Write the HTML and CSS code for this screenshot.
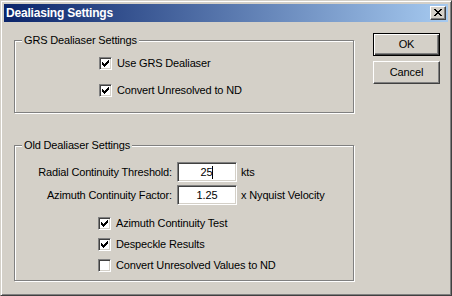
FILE: index.html
```html
<!DOCTYPE html>
<html>
<head>
<meta charset="utf-8">
<title>Dealiasing Settings</title>
<link rel="stylesheet" href="styles.css">
</head>
<body>
<div class="window">
  <div class="caption">
    <span class="caption-title">Dealiasing Settings</span>
    <span class="caption-close"><svg width="8" height="7" viewBox="0 0 8 7" shape-rendering="crispEdges"><path d="M0 0h2v1h-2z M6 0h2v1h-2z M1 1h2v1h-2z M5 1h2v1h-2z M2 2h4v1h-4z M3 3h2v1h-2z M2 4h4v1h-4z M1 5h2v1h-2z M5 5h2v1h-2z M0 6h2v1h-2z M6 6h2v1h-2z" fill="#000"/></svg></span>
  </div>
  <div class="client">
    <div class="groups">
      <div class="group group-grs">
        <span class="legend">GRS Dealiaser Settings</span>
        <div class="checks checks-grs">
          <div class="check"><span class="box"><svg width="7" height="7" viewBox="0 0 7 7" shape-rendering="crispEdges"><path d="M6 0h1v1h-1z M5 1h2v1h-2z M0 2h1v1h-1z M4 2h3v1h-3z M0 3h2v1h-2z M3 3h3v1h-3z M0 4h5v1h-5z M1 5h3v1h-3z M2 6h1v1h-1z" fill="#000"/></svg></span><span class="check-text">Use GRS Dealiaser</span></div>
          <div class="check"><span class="box"><svg width="7" height="7" viewBox="0 0 7 7" shape-rendering="crispEdges"><path d="M6 0h1v1h-1z M5 1h2v1h-2z M0 2h1v1h-1z M4 2h3v1h-3z M0 3h2v1h-2z M3 3h3v1h-3z M0 4h5v1h-5z M1 5h3v1h-3z M2 6h1v1h-1z" fill="#000"/></svg></span><span class="check-text">Convert Unresolved to ND</span></div>
        </div>
      </div>
      <div class="group group-old">
        <span class="legend">Old Dealiaser Settings</span>
        <div class="fields">
          <span class="field-label">Radial Continuity Threshold:</span>
          <span class="edit">25<span class="caret"></span></span>
          <span class="unit">kts</span>
          <span class="field-label">Azimuth Continuity Factor:</span>
          <span class="edit">1.25</span>
          <span class="unit">x Nyquist Velocity</span>
        </div>
        <div class="checks checks-old">
          <div class="check"><span class="box"><svg width="7" height="7" viewBox="0 0 7 7" shape-rendering="crispEdges"><path d="M6 0h1v1h-1z M5 1h2v1h-2z M0 2h1v1h-1z M4 2h3v1h-3z M0 3h2v1h-2z M3 3h3v1h-3z M0 4h5v1h-5z M1 5h3v1h-3z M2 6h1v1h-1z" fill="#000"/></svg></span><span class="check-text">Azimuth Continuity Test</span></div>
          <div class="check"><span class="box"><svg width="7" height="7" viewBox="0 0 7 7" shape-rendering="crispEdges"><path d="M6 0h1v1h-1z M5 1h2v1h-2z M0 2h1v1h-1z M4 2h3v1h-3z M0 3h2v1h-2z M3 3h3v1h-3z M0 4h5v1h-5z M1 5h3v1h-3z M2 6h1v1h-1z" fill="#000"/></svg></span><span class="check-text">Despeckle Results</span></div>
          <div class="check"><span class="box"></span><span class="check-text">Convert Unresolved Values to ND</span></div>
        </div>
      </div>
    </div>
    <div class="buttons">
      <div class="btn btn-default">OK</div>
      <div class="btn">Cancel</div>
    </div>
  </div>
</div>
</body>
</html>
```

FILE: styles.css
```css
* { box-sizing: border-box; }
html, body { margin: 0; padding: 0; background: #d4d0c8; }
body {
  font-family: "Liberation Sans", Arial, sans-serif;
  font-size: 11px;
  line-height: 13px;
  letter-spacing: -0.15px;
  color: #000;
}
.window {
  width: 452px;
  height: 296px;
  background: #d4d0c8;
  border: 1px solid;
  border-color: #d4d0c8 #404040 #404040 #d4d0c8;
  box-shadow: inset 1px 1px 0 #fff, inset -1px -1px 0 #808080;
  padding: 3px;
  display: flex;
  flex-direction: column;
}
.caption {
  height: 18px;
  background: linear-gradient(to right, #0a246a, #a6caf0);
  display: flex;
  align-items: center;
  padding: 0 2px 0 2px;
}
.caption-title {
  color: #fff;
  font-weight: bold;
  font-size: 12px;
  letter-spacing: -0.2px;
}
.caption-close {
  margin-left: auto;
  width: 16px;
  height: 14px;
  background: #d4d0c8;
  border: 1px solid;
  border-color: #fff #404040 #404040 #fff;
  box-shadow: inset -1px -1px 0 #808080;
  display: flex;
  justify-content: center;
  padding-top: 2px;
}
.caption-close svg { display: block; }
.client {
  display: flex;
  align-items: flex-start;
  padding: 11px 0 0 10px;
  column-gap: 19px;
}
.groups {
  width: 340px;
  padding-top: 7px;
  display: flex;
  flex-direction: column;
  row-gap: 32px;
}
.group {
  position: relative;
  border: 1px solid #808080;
  box-shadow: 1px 1px 0 #fff, inset 1px 1px 0 #fff;
}
.legend {
  position: absolute;
  left: 7px;
  top: -7px;
  padding: 0 2px;
  background: #d4d0c8;
  white-space: nowrap;
}
.group-grs { padding: 16px 0 15px 0; }
.group-old { padding: 16px 0 8px 0; }
.checks {
  display: flex;
  flex-direction: column;
}
.checks-grs { padding-left: 84px; row-gap: 14px; }
.checks-old { padding-left: 83px; row-gap: 8px; margin-top: 12px; }
.check {
  display: flex;
  align-items: center;
  height: 13px;
  column-gap: 5px;
  white-space: nowrap;
}
.box {
  width: 13px;
  height: 13px;
  flex: none;
  background: #fff;
  border: 1px solid;
  border-color: #808080 #fff #fff #808080;
  box-shadow: inset 1px 1px 0 #404040, inset -1px -1px 0 #d4d0c8;
  padding: 2px;
}
.box svg { display: block; }
.fields {
  display: grid;
  grid-template-columns: 157px 60px auto;
  column-gap: 5px;
  row-gap: 3px;
  align-items: center;
}
.field-label {
  text-align: right;
  white-space: nowrap;
}
.edit {
  height: 20px;
  background: #fff;
  border: 1px solid;
  border-color: #808080 #fff #fff #808080;
  box-shadow: inset 1px 1px 0 #404040, inset -1px -1px 0 #d4d0c8;
  display: flex;
  align-items: center;
  justify-content: center;
}
.caret {
  width: 1px;
  height: 13px;
  background: #000;
}
.unit {
  margin-left: -1px;
  white-space: nowrap;
}
.buttons {
  display: flex;
  flex-direction: column;
  row-gap: 5px;
}
.btn {
  width: 67px;
  height: 23px;
  border: 1px solid;
  border-color: #fff #404040 #404040 #fff;
  box-shadow: inset -1px -1px 0 #808080;
  display: flex;
  align-items: center;
  justify-content: center;
}
.btn-default {
  border: 1px solid #000;
  box-shadow: inset 1px 1px 0 #fff, inset -1px -1px 0 #404040, inset -2px -2px 0 #808080;
}
```
